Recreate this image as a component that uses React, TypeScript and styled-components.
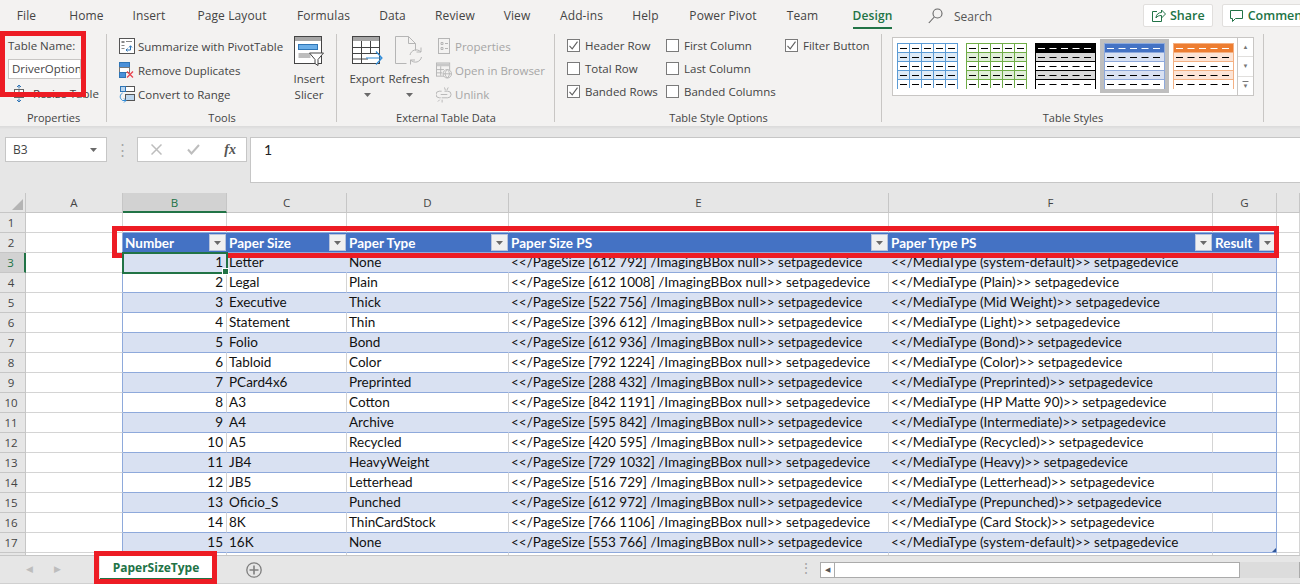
import React from 'react'
import styled, { createGlobalStyle } from 'styled-components'

const tabs: [string, number][] = [
  ['File', 53], ['Home', 67], ['Insert', 58], ['Page Layout', 108], ['Formulas', 75], ['Data', 63],
  ['Review', 62], ['View', 62], ['Add-ins', 67], ['Help', 61], ['Power Pivot', 94], ['Team', 65], ['Design', 75]
]

const columns = ['A', 'B', 'C', 'D', 'E', 'F', 'G', '']
const headers = ['Number', 'Paper Size', 'Paper Type', 'Paper Size PS', 'Paper Type PS', 'Result']

const rows: [number, string, string, string, string][] = [
  [1, 'Letter', 'None', '612 792', 'system-default'],
  [2, 'Legal', 'Plain', '612 1008', 'Plain'],
  [3, 'Executive', 'Thick', '522 756', 'Mid Weight'],
  [4, 'Statement', 'Thin', '396 612', 'Light'],
  [5, 'Folio', 'Bond', '612 936', 'Bond'],
  [6, 'Tabloid', 'Color', '792 1224', 'Color'],
  [7, 'PCard4x6', 'Preprinted', '288 432', 'Preprinted'],
  [8, 'A3', 'Cotton', '842 1191', 'HP Matte 90'],
  [9, 'A4', 'Archive', '595 842', 'Intermediate'],
  [10, 'A5', 'Recycled', '420 595', 'Recycled'],
  [11, 'JB4', 'HeavyWeight', '729 1032', 'Heavy'],
  [12, 'JB5', 'Letterhead', '516 729', 'Letterhead'],
  [13, 'Oficio_S', 'Punched', '612 972', 'Prepunched'],
  [14, '8K', 'ThinCardStock', '766 1106', 'Card Stock'],
  [15, '16K', 'None', '553 766', 'system-default']
]

const swatches = [
  { line: '#5b9bd5', band: '#deebf7', head: '', dash: '#000', grid: true },
  { line: '#70ad47', band: '#e2efda', head: '', dash: '#000', grid: true },
  { line: '#000', band: '#d9d9d9', head: '#000', dash: '#000', grid: false },
  { line: '#8ea9db', band: '#d9e1f2', head: '#4472c4', dash: '#000', grid: false },
  { line: '#f4b183', band: '#fce4d6', head: '#ed7d31', dash: '#000', grid: false }
]

const Check = () => (
  <svg width="11" height="11" viewBox="0 0 11 11" fill="none" stroke="#5f5f5f" strokeWidth="1.1">
    <path d="M1.5 5.8 4.2 8.8 9.5 1.6" />
  </svg>
)

const Caret = () => (
  <svg width="7" height="4" viewBox="0 0 7 4" fill="#6a6a6a">
    <path d="M0 0h7L3.5 4z" />
  </svg>
)

const PivotIcon = () => (
  <svg width="16" height="16" viewBox="0 0 16 16" fill="none">
    <rect x=".5" y=".5" width="15" height="15" fill="#fff" stroke="#555" />
    <path d="M2.5 3h3v2h-3zM7 3h6v1H7zM2.5 7h3v1h-3zM2.5 10h3v1h-3z" fill="#888" />
    <path d="M7 12h4.5V8M10 9.5l1.5-1.8L13 9.5M8.5 10.5 7 12l1.5 1.5" stroke="#2e75b6" />
  </svg>
)

const DuplicatesIcon = () => (
  <svg width="16" height="17" viewBox="0 0 16 17" fill="none">
    <rect x=".5" y=".5" width="10" height="5" fill="#4a90d9" stroke="#2e75b6" />
    <rect x=".5" y="5.5" width="10" height="5" fill="#fff" stroke="#777" />
    <rect x=".5" y="10.5" width="6" height="5" fill="#4a90d9" stroke="#2e75b6" />
    <path d="M8 9.5l6 6M14 9.5l-6 6" stroke="#e8434f" strokeWidth="1.3" />
  </svg>
)

const RangeIcon = () => (
  <svg width="16" height="17" viewBox="0 0 16 17" fill="none">
    <rect x="6.5" y=".5" width="9" height="5" fill="#fff" stroke="#555" />
    <rect x="1.5" y=".5" width="5" height="5" fill="#bcd6ee" stroke="#2e75b6" />
    <rect x="6.5" y="8.5" width="9" height="6" fill="#bcd6ee" stroke="#555" />
    <path d="M3.5 7C1 8.500 0 12 3.500 14.500H7M5 12.500 7 14.500 5 16.500" stroke="#2e8bd8" />
  </svg>
)

const SlicerIcon = () => (
  <svg width="30" height="30" viewBox="0 0 30 30" fill="none">
    <rect x=".5" y=".5" width="27" height="27" fill="#fff" stroke="#444" />
    <rect x="1" y="1" width="26" height="4" fill="#a6a6a6" />
    <rect x="4.500" y="8.500" width="19" height="5" fill="#6aaee8" stroke="#2e75b6" />
    <rect x="4.500" y="17" width="12" height="5" fill="#bdbdbd" />
    <path d="M15.500 17h14l-5.500 6.500v6l-3-2v-4z" fill="#fff" stroke="#444" />
  </svg>
)

const ExportIcon = () => (
  <svg width="31" height="29" viewBox="0 0 31 29" fill="none">
    <rect x=".5" y=".5" width="27" height="27" fill="#fff" stroke="#444" />
    <rect x="1" y="1" width="26" height="4" fill="#a6a6a6" />
    <path d="M1 11.500h26M1 17.500h26M1 23h15M9.500 5v22M18.500 5v12" stroke="#444" />
    <path d="M14 22h15M24 15.500l6 6.500-6 6.500" stroke="#2e8bd8" strokeWidth="1.2" fill="none" />
  </svg>
)

const RefreshIcon = () => (
  <svg width="28" height="29" viewBox="0 0 28 29" fill="none" stroke="#b5b5b5">
    <path d="M.5.500h13l7 7v7M.5.500v27h11M13.500.500v7h7" />
    <path d="M15 19c1-5 7-7 11-3M26 11.500V16h-4.500M26.500 21c-1 5-7 7-11 3M15.500 28.500V24H20" />
  </svg>
)

const PropsIcon = () => (
  <svg width="14" height="16" viewBox="0 0 14 16" fill="none" stroke="#b5b5b5">
    <rect x="1.500" y=".5" width="11" height="15" />
    <path d="M4 4.500h2v2H4zM8 5.500h3M4 9.500h2v2H4zM8 10.500h3" />
  </svg>
)

const BrowserIcon = () => (
  <svg width="17" height="17" viewBox="0 0 17 17" fill="none" stroke="#b5b5b5">
    <rect x=".5" y=".5" width="14" height="14" />
    <rect x="1" y="1" width="13" height="3" fill="#c8c8c8" stroke="none" />
    <path d="M.5 7.500h8M.5 11h6M5 4v10" />
    <circle cx="12" cy="12" r="4.500" fill="#f3f2f1" />
    <path d="M7.500 12h9M12 7.500c-3 3-3 6 0 9M12 7.500c3 3 3 6 0 9" />
  </svg>
)

const UnlinkIcon = () => (
  <svg width="17" height="17" viewBox="0 0 17 17" fill="none" stroke="#b5b5b5">
    <path d="M6 5H3.500a3.500 3.500 0 0 0 0 7H5M9 5h3.500a3.500 3.500 0 0 1 0 7H6M5 8.500h7M9 1l1 3M13 1l-1.500 3M4 14l-2 2M6.500 14v3" />
  </svg>
)

const ResizeIcon = () => (
  <svg width="12" height="17" viewBox="0 0 12 17" fill="none">
    <path d="M6 .5v3M4 2l2-2 2 2M6 13.500v3M4 15l2 2 2-2" stroke="#2e75b6" />
    <rect x="1.500" y="4.500" width="9" height="8" stroke="#666" fill="#fff" />
    <path d="M1.500 7.500h9M6 4.500v8" stroke="#666" />
  </svg>
)

const SearchIcon = () => (
  <svg width="15" height="16" viewBox="0 0 15 16" fill="none" stroke="#666" strokeWidth="1.1">
    <circle cx="9.500" cy="5.500" r="4.500" />
    <path d="M6.300 9 .8 15" />
  </svg>
)

const ShareIcon = () => (
  <svg width="15" height="15" viewBox="0 0 15 15" fill="none" stroke="#217346">
    <path d="M6 3.500H1.500v10h9V9" />
    <path d="M5 10c0-3.500 2.500-5.500 5.500-5.500V2l4 4-4 4V7.500C8 7.500 6 8 5 10z" />
  </svg>
)

const CommentIcon = () => (
  <svg width="14" height="14" viewBox="0 0 14 14" fill="none" stroke="#217346">
    <path d="M.5 1.500h12v8H5.500L2.500 12.500v-3h-2z" />
  </svg>
)

const CrossIcon = () => (
  <svg width="11" height="11" viewBox="0 0 11 11" stroke="#bdbdbd" strokeWidth="1.500">
    <path d="M.5.500l10 10M10.500.500l-10 10" />
  </svg>
)

const TickIcon = () => (
  <svg width="13" height="11" viewBox="0 0 13 11" fill="none" stroke="#bdbdbd" strokeWidth="2">
    <path d="M1 5.500 4.500 9.500 12 1" />
  </svg>
)

const PlusCircle = () => (
  <svg width="16" height="16" viewBox="0 0 16 16" fill="none" stroke="#7f7f7f">
    <circle cx="8" cy="8" r="7.200" strokeWidth="1.300" />
    <path d="M8 3.500v9M3.500 8h9" strokeWidth="1.600" />
  </svg>
)

const TableSwatch = ({ line, band, head, grid }: { line: string; band: string; head: string; dash: string; grid: boolean }) => {
  const rowsY = [0, 1, 2, 3, 4]
  return (
    <svg width="61" height="46" viewBox="0 0 61 46">
      <rect x=".5" y=".5" width="60" height="45" fill="#fff" stroke={line} />
      {rowsY.map(i => (
        <g key={i}>
          <rect
            x="1"
            y={1 + i * 9}
            width="59"
            height="9"
            fill={i === 0 && head ? head : i % 2 === 1 ? band : '#fff'}
          />
          {i > 0 && <path d={`M1 ${i * 9 + 0.5}h59`} stroke={line} />}
          <path
            d={`M${grid ? 3 : 3} ${i * 9 + 5.500}h55`}
            stroke={i === 0 && head ? '#fff' : '#000'}
            strokeDasharray={grid ? '7 5' : '7 4.500'}
          />
        </g>
      ))}
      {grid && [12, 24, 36, 48].map(x => <path key={x} d={`M${x + 0.5} 1v44`} stroke={line} />)}
    </svg>
  )
}

const FilterButton = () => (
  <Filter>
    <Caret />
  </Filter>
)

const App = () => (
  <>
    <GlobalStyle />
    <Window>
      <TabBar>
        {tabs.map(([name, width]) => (
          <Tab key={name} $width={width} $active={name === 'Design'}>
            <span>{name}</span>
          </Tab>
        ))}
        <SearchBox>
          <SearchIcon />
          Search
        </SearchBox>
        <TopButton $left={149}>
          <ShareIcon />
          Share
        </TopButton>
        <TopButton $left={9}>
          <CommentIcon />
          Comments
        </TopButton>
      </TabBar>

      <Ribbon>
        <Group $width={107}>
          <GroupBody $column $pad={8}>
            <PlainRow>Table Name:</PlainRow>
            <NameInput>DriverOption</NameInput>
            <ResizeRow>
              <ResizeIcon />
              Resize Table
            </ResizeRow>
          </GroupBody>
          <GroupLabel>Properties</GroupLabel>
        </Group>

        <Group $width={230}>
          <GroupBody $pad={12}>
            <ToolList>
              <ToolRow><PivotIcon />Summarize with PivotTable</ToolRow>
              <ToolRow><DuplicatesIcon />Remove Duplicates</ToolRow>
              <ToolRow><RangeIcon />Convert to Range</ToolRow>
            </ToolList>
            <BigButton $width={40}>
              <BigIcon><SlicerIcon /></BigIcon>
              <span>Insert</span>
              <span>Slicer</span>
            </BigButton>
          </GroupBody>
          <GroupLabel>Tools</GroupLabel>
        </Group>

        <Group $width={218}>
          <GroupBody $pad={10}>
            <BigButton $width={40}>
              <BigIcon><ExportIcon /></BigIcon>
              <span>Export</span>
              <CaretLine><Caret /></CaretLine>
            </BigButton>
            <BigButton $width={44}>
              <BigIcon><RefreshIcon /></BigIcon>
              <span>Refresh</span>
              <CaretLine><Caret /></CaretLine>
            </BigButton>
            <LinkList>
              <ToolRow $disabled><PropsIcon />Properties</ToolRow>
              <ToolRow $disabled><BrowserIcon />Open in Browser</ToolRow>
              <ToolRow $disabled><UnlinkIcon />Unlink</ToolRow>
            </LinkList>
          </GroupBody>
          <GroupLabel>External Table Data</GroupLabel>
        </Group>

        <Group $width={327}>
          <GroupBody $pad={12}>
            <OptionColumn $width={99}>
              <Option><Box><Check /></Box>Header Row</Option>
              <Option><Box />Total Row</Option>
              <Option><Box><Check /></Box>Banded Rows</Option>
            </OptionColumn>
            <OptionColumn $width={119}>
              <Option><Box />First Column</Option>
              <Option><Box />Last Column</Option>
              <Option><Box />Banded Columns</Option>
            </OptionColumn>
            <OptionColumn $width={90}>
              <Option><Box><Check /></Box>Filter Button</Option>
            </OptionColumn>
          </GroupBody>
          <GroupLabel>Table Style Options</GroupLabel>
        </Group>

        <Group $width={382}>
          <GroupBody $pad={10}>
            <Gallery>
              <SwatchRow>
                {swatches.map((s, i) => (
                  <Swatch key={s.line} $selected={i === 3}>
                    <TableSwatch {...s} />
                  </Swatch>
                ))}
              </SwatchRow>
              <GalleryScroll>
                <GalleryArrow>▲</GalleryArrow>
                <GalleryArrow>▼</GalleryArrow>
                <GalleryArrow $more>▼</GalleryArrow>
              </GalleryScroll>
            </Gallery>
          </GroupBody>
          <GroupLabel>Table Styles</GroupLabel>
        </Group>
      </Ribbon>

      <FormulaBar>
        <NameBox>
          B3
          <Caret />
        </NameBox>
        <Dots>⋮</Dots>
        <FormulaButtons>
          <CrossIcon />
          <TickIcon />
          <Fx>fx</Fx>
        </FormulaButtons>
        <FormulaInput>1</FormulaInput>
      </FormulaBar>

      <Sheet>
        <Corner />
        {columns.map(c => (
          <ColHead key={c} $selected={c === 'B'}>{c}</ColHead>
        ))}

        <RowHead>1</RowHead>
        <Cell />
        {headers.map(h => <Cell key={h} $above />)}
        <Cell />

        <RowHead>2</RowHead>
        <Cell $beforeTable />
        {headers.map(h => (
          <HeadCell key={h}>
            {h}
            <FilterButton />
          </HeadCell>
        ))}
        <Cell />

        {rows.map((r, i) => {
          const band = i % 2 === 0
          return (
            <React.Fragment key={r[0]}>
              <RowHead $selected={i === 0}>{i + 3}</RowHead>
              <Cell $beforeTable />
              <Cell $table $band={band} $right $active={i === 0}>{r[0]}</Cell>
              <Cell $table $band={band}>{r[1]}</Cell>
              <Cell $table $band={band}>{r[2]}</Cell>
              <Cell $table $band={band}>{`<</PageSize [${r[3]}] /ImagingBBox null>> setpagedevice`}</Cell>
              <Cell $table $band={band}>{`<</MediaType (${r[4]})>> setpagedevice`}</Cell>
              <Cell $table $band={band} $last $grip={i === rows.length - 1} />
              <Cell />
            </React.Fragment>
          )
        })}

        <RowHead>18</RowHead>
        {columns.map(c => <Cell key={c} />)}
      </Sheet>

      <BottomBar>
        <NavArrow>◀</NavArrow>
        <NavArrow>▶</NavArrow>
        <SheetTab>PaperSizeType</SheetTab>
        <AddSheet><PlusCircle /></AddSheet>
        <BottomDots>⋮</BottomDots>
        <HScroll>
          <HScrollButton>◀</HScrollButton>
          <HScrollThumb />
          <HScrollTrack />
          <HScrollEnd />
        </HScroll>
      </BottomBar>

      <Marker $left={0} $top={31} $width={86} $height={66} />
      <Marker $left={112} $top={226} $width={1167} $height={32} />
      <Marker $left={94} $top={551} $width={123} $height={33} />
    </Window>
  </>
)

export default App

const GlobalStyle = createGlobalStyle`
  html, body {
    margin: 0;
    padding: 0;
    overflow: hidden;
    background: #fff;
  }
`

const Window = styled.div`
  position: relative;
  width: 1300px;
  height: 584px;
  overflow: hidden;
  display: flex;
  flex-direction: column;
  font-family: "Open Sans", "Noto Sans", sans-serif;
  color: #444;
`

const TabBar = styled.div`
  height: 32px;
  flex: none;
  display: flex;
  align-items: stretch;
  background: #f3f2f1;
`

const Tab = styled.div<{ $width: number; $active?: boolean }>`
  width: ${p => p.$width}px;
  flex: none;
  display: flex;
  justify-content: center;
  font-size: 12px;
  line-height: 31px;
  letter-spacing: 0.1px;
  color: ${p => (p.$active ? '#217346' : '#444')};
  font-weight: ${p => (p.$active ? 600 : 400)};

  span {
    height: 29px;
    box-sizing: border-box;
    border-bottom: ${p => (p.$active ? '2px solid #217346' : 'none')};
  }
`

const SearchBox = styled.div`
  margin-left: 18px;
  width: 66px;
  flex: none;
  display: flex;
  align-items: center;
  gap: 11px;
  font-size: 12px;
  color: #555;
`

const TopButton = styled.div<{ $left: number }>`
  margin-left: ${p => p.$left}px;
  margin-top: 4px;
  height: 23px;
  padding: 0 7px;
  flex: none;
  box-sizing: border-box;
  display: flex;
  align-items: center;
  gap: 4px;
  background: #fff;
  border: 1px solid #e1dfdd;
  border-radius: 2px;
  font-size: 12.5px;
  font-weight: 600;
  color: #217346;
`

const Ribbon = styled.div`
  height: 94px;
  flex: none;
  display: flex;
  background: #f3f2f1;
`

const Group = styled.div<{ $width: number }>`
  position: relative;
  width: ${p => p.$width}px;
  flex: none;
  display: flex;
  flex-direction: column;

  &::after {
    content: '';
    position: absolute;
    right: 0;
    top: 2px;
    bottom: 4px;
    width: 1px;
    background: #c8c6c4;
  }
`

const GroupBody = styled.div<{ $pad: number; $column?: boolean }>`
  height: 78px;
  box-sizing: border-box;
  padding: 2px 0 0 ${p => p.$pad}px;
  display: flex;
  flex-direction: ${p => (p.$column ? 'column' : 'row')};
`

const GroupLabel = styled.div`
  text-align: center;
  font-size: 11px;
  line-height: 16px;
  color: #444;
`

const PlainRow = styled.div`
  height: 24px;
  line-height: 24px;
  font-size: 11.500px;
`

const NameInput = styled.div`
  width: 73px;
  height: 20px;
  margin-top: 1px;
  padding-left: 3px;
  box-sizing: border-box;
  background: #fff;
  border: 1px solid #c8c6c4;
  font-size: 11.500px;
  line-height: 18px;
  overflow: hidden;
  white-space: nowrap;
`

const ResizeRow = styled.div`
  height: 24px;
  margin-top: 2px;
  padding-left: 5px;
  display: flex;
  align-items: center;
  gap: 8px;
  font-size: 11.500px;
  white-space: nowrap;
`

const ToolList = styled.div`
  width: 170px;
  flex: none;
`

const LinkList = styled.div`
  margin-left: 5px;
  flex: none;
`

const ToolRow = styled.div<{ $disabled?: boolean }>`
  height: 24px;
  display: flex;
  align-items: center;
  gap: 3px;
  font-size: 11.500px;
  white-space: nowrap;
  color: ${p => (p.$disabled ? '#a6a6a6' : '#444')};

  svg {
    flex: none;
    width: 16px;
  }
`

const BigButton = styled.div<{ $width: number }>`
  width: ${p => p.$width}px;
  flex: none;
  display: flex;
  flex-direction: column;
  align-items: center;
  padding-top: 2px;
  font-size: 11.500px;
  line-height: 16px;
  white-space: nowrap;
`

const BigIcon = styled.div`
  height: 32px;
  margin-bottom: 3px;
`

const CaretLine = styled.div`
  height: 16px;
  display: flex;
  align-items: center;
`

const OptionColumn = styled.div<{ $width: number }>`
  width: ${p => p.$width}px;
  flex: none;
`

const Option = styled.div`
  height: 23px;
  display: flex;
  align-items: center;
  gap: 5px;
  font-size: 11.500px;
  white-space: nowrap;
`

const Box = styled.span`
  width: 13px;
  height: 13px;
  flex: none;
  box-sizing: border-box;
  display: flex;
  align-items: center;
  justify-content: center;
  background: #fff;
  border: 1px solid #7a7a7a;
`

const Gallery = styled.div`
  width: 362px;
  height: 59px;
  margin-top: 3px;
  box-sizing: border-box;
  display: flex;
  justify-content: space-between;
  background: #fff;
  border: 1px solid #c8c6c4;
`

const SwatchRow = styled.div`
  display: flex;
  gap: 8px;
  padding: 5px 0 0 4px;
`

const Swatch = styled.div<{ $selected?: boolean }>`
  width: 61px;
  height: 46px;
  background: ${p => (p.$selected ? '#bfbfbf' : 'transparent')};
  box-shadow: ${p => (p.$selected ? '0 0 0 4px #bfbfbf' : 'none')};
`

const GalleryScroll = styled.div`
  width: 15px;
  display: flex;
  flex-direction: column;
  border-left: 1px solid #c8c6c4;
`

const GalleryArrow = styled.div<{ $more?: boolean }>`
  flex: 1;
  display: flex;
  align-items: center;
  justify-content: center;
  font-size: 6px;
  color: #777;
  border-bottom: 1px solid #e1dfdd;
  text-decoration: ${p => (p.$more ? 'overline' : 'none')};

  &:last-child {
    border-bottom: 0;
  }
`

const FormulaBar = styled.div`
  height: 67px;
  flex: none;
  box-sizing: border-box;
  padding: 11px 0 0 5px;
  display: flex;
  align-items: flex-start;
  background: #e6e6e6;
  box-shadow: inset 0 4px 2px -2px #dcdcdc;
`

const NameBox = styled.div`
  width: 102px;
  height: 25px;
  flex: none;
  box-sizing: border-box;
  padding: 0 9px 0 7px;
  display: flex;
  align-items: center;
  justify-content: space-between;
  background: #fff;
  border: 1px solid #c6c6c6;
  font-size: 12px;
  color: #444;
`

const Dots = styled.div`
  width: 30px;
  flex: none;
  text-align: center;
  font-size: 15px;
  line-height: 25px;
  color: #a6a6a6;
`

const FormulaButtons = styled.div`
  width: 110px;
  height: 25px;
  flex: none;
  box-sizing: border-box;
  padding: 0 10px 0 13px;
  display: flex;
  align-items: center;
  justify-content: space-between;
  background: #fff;
  border: 1px solid #c6c6c6;
`

const Fx = styled.span`
  font-family: "Liberation Serif", serif;
  font-style: italic;
  font-weight: 700;
  font-size: 14px;
  color: #555;
`

const FormulaInput = styled.div`
  margin-left: 3px;
  flex: 1;
  height: 46px;
  box-sizing: border-box;
  padding: 3px 0 0 13px;
  background: #fff;
  border: 1px solid #c6c6c6;
  border-right: 0;
  font-family: Lato, sans-serif;
  font-size: 14px;
  line-height: 18px;
  color: #222;
`

const Sheet = styled.div`
  height: 362px;
  flex: none;
  overflow: hidden;
  display: grid;
  grid-template-columns: 26px 97px 104px 120px 162px 380px 324px 64px 23px;
  grid-auto-rows: 20px;
  background: #fff;
  font-family: Lato, sans-serif;
  font-size: 13.500px;
  color: #111;
`

const Corner = styled.div`
  position: relative;
  background: #e6e6e6;
  border-right: 1px solid #c6c6c6;
  border-bottom: 1px solid #c6c6c6;

  &::after {
    content: '';
    position: absolute;
    right: 2px;
    bottom: 2px;
    border-style: solid;
    border-width: 0 0 11px 11px;
    border-color: transparent transparent #b4b4b4 transparent;
  }
`

const ColHead = styled.div<{ $selected?: boolean }>`
  box-sizing: border-box;
  text-align: center;
  font-family: "Open Sans", sans-serif;
  font-size: 11.500px;
  line-height: 19px;
  color: ${p => (p.$selected ? '#217346' : '#444')};
  background: ${p => (p.$selected ? '#d2d2d2' : '#e6e6e6')};
  border-right: 1px solid #c6c6c6;
  border-bottom: ${p => (p.$selected ? '2px solid #217346' : '1px solid #c6c6c6')};
`

const RowHead = styled.div<{ $selected?: boolean }>`
  box-sizing: border-box;
  padding-right: 3px;
  text-align: center;
  font-family: "Open Sans", sans-serif;
  font-size: 11.500px;
  line-height: 19px;
  color: ${p => (p.$selected ? '#217346' : '#444')};
  background: ${p => (p.$selected ? '#d2d2d2' : '#e6e6e6')};
  border-bottom: 1px solid #c6c6c6;
  border-right: ${p => (p.$selected ? '2px solid #217346' : '1px solid #c6c6c6')};
`

type CellProps = {
  $table?: boolean
  $band?: boolean
  $right?: boolean
  $last?: boolean
  $above?: boolean
  $beforeTable?: boolean
  $active?: boolean
  $grip?: boolean
}

const Cell = styled.div<CellProps>`
  position: relative;
  box-sizing: border-box;
  padding: 0 3px 0 2px;
  line-height: 19px;
  white-space: nowrap;
  text-align: ${p => (p.$right ? 'right' : 'left')};
  background: ${p => (p.$band ? '#d9e1f2' : '#fff')};
  border-right: 1px solid ${p => (p.$last || p.$beforeTable ? '#8ea9db' : p.$band ? '#d9e1f2' : '#d4d4d4')};
  border-bottom: 1px solid ${p => (p.$table || p.$above ? '#8ea9db' : '#d4d4d4')};
  z-index: ${p => (p.$active ? 2 : 'auto')};
  outline: ${p => (p.$active ? '2px solid #217346' : 'none')};
  outline-offset: -1px;

  ${p =>
    p.$active &&
    `&::after {
      content: '';
      position: absolute;
      right: -3px;
      bottom: -3px;
      width: 5px;
      height: 5px;
      background: #217346;
      border: 1px solid #fff;
    }`}

  ${p =>
    p.$grip &&
    `&::after {
      content: '';
      position: absolute;
      right: 0;
      bottom: 0;
      border-style: solid;
      border-width: 0 0 4px 4px;
      border-color: transparent transparent #2f5597 transparent;
    }`}
`

const HeadCell = styled.div`
  box-sizing: border-box;
  padding: 0 1px 0 2px;
  display: flex;
  align-items: center;
  justify-content: space-between;
  white-space: nowrap;
  background: #4472c4;
  color: #fff;
  font-weight: 700;
  border-bottom: 1px solid #8ea9db;
`

const Filter = styled.span`
  width: 17px;
  height: 17px;
  flex: none;
  box-sizing: border-box;
  display: flex;
  align-items: center;
  justify-content: center;
  background: #f0f0f0;
  border: 1px solid #b8c4dc;
`

const BottomBar = styled.div`
  height: 29px;
  flex: none;
  box-sizing: border-box;
  display: flex;
  align-items: flex-start;
  background: #e6e6e6;
  border-top: 1px solid #c6c6c6;
  border-bottom: 1px solid #d0d0d0;
`

const NavArrow = styled.div`
  width: 28px;
  margin-left: 15px;
  flex: none;
  font-size: 9px;
  line-height: 25px;
  text-align: center;
  color: #bdbdbd;

  & + & {
    margin-left: 0;
  }
`

const SheetTab = styled.div`
  width: 112px;
  height: 24px;
  margin-left: 29px;
  flex: none;
  box-sizing: border-box;
  text-align: center;
  background: #fff;
  border-bottom: 2px solid #217346;
  font-size: 12px;
  line-height: 24px;
  font-weight: 700;
  color: #217346;
`

const AddSheet = styled.div`
  width: 16px;
  height: 16px;
  margin: 5px 0 0 34px;
  flex: none;
`

const BottomDots = styled.div`
  width: 10px;
  margin-left: 537px;
  flex: none;
  font-size: 14px;
  line-height: 24px;
  text-align: center;
  color: #a6a6a6;
`

const HScroll = styled.div`
  width: 485px;
  height: 16px;
  margin: 6px 0 0 11px;
  flex: none;
  display: flex;
`

const HScrollButton = styled.div`
  width: 15px;
  flex: none;
  box-sizing: border-box;
  background: #fff;
  border: 1px solid #ababab;
  font-size: 7px;
  line-height: 14px;
  text-align: center;
  color: #555;
`

const HScrollThumb = styled.div`
  width: 405px;
  flex: none;
  box-sizing: border-box;
  background: #fff;
  border: 1px solid #ababab;
  border-left: 0;
`

const HScrollTrack = styled.div`
  flex: 1;
  background: #dcdcdc;
`

const HScrollEnd = styled.div`
  width: 5px;
  flex: none;
  background: #fff;
  border-left: 1px solid #ababab;
`

const Marker = styled.div<{ $left: number; $top: number; $width: number; $height: number }>`
  position: absolute;
  left: ${p => p.$left}px;
  top: ${p => p.$top}px;
  width: ${p => p.$width}px;
  height: ${p => p.$height}px;
  box-sizing: border-box;
  border: 5px solid #ed1c24;
  pointer-events: none;
`
